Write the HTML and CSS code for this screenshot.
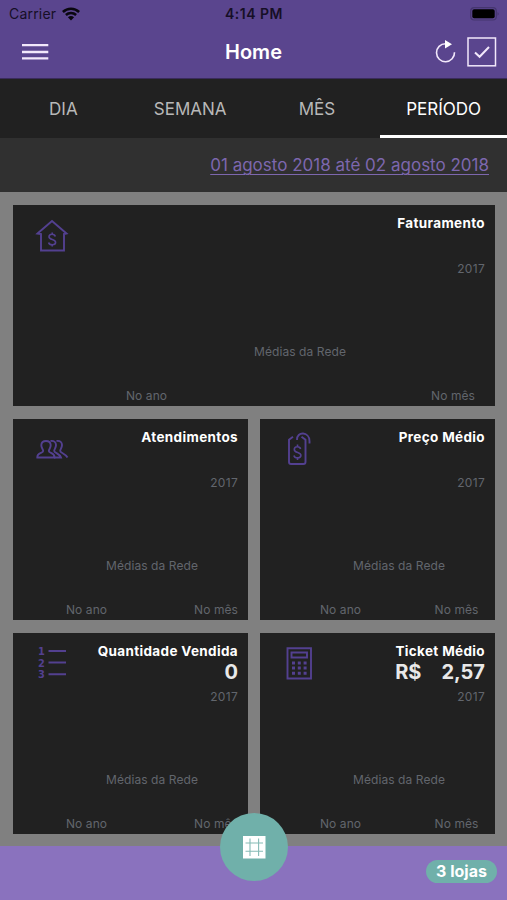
FILE: index.html
```html
<!DOCTYPE html>
<html lang="pt-BR">
<head>
<meta charset="utf-8">
<title>Home</title>
<link rel="stylesheet" href="styles.css">
</head>
<body>
<div class="app">
  <header class="header">
    <div class="status">
      <div class="carrier"><span>Carrier</span>
        <svg width="18" height="14" viewBox="0 0 18 14" fill="none" stroke="#09070f" stroke-width="2.500"><path d="M.9 5C5.400.6 12.600.6 17.100 5M3.900 8C6.800 5.200 11.200 5.200 14.100 8"/><path d="M5.900 10.200Q9 7.600 12.100 10.200L9 13.400z" fill="#09070f" stroke="none"/></svg>
      </div>
      <div class="clock">4:14 PM</div>
      <svg class="battery" width="30" height="14" viewBox="0 0 30 14"><rect x=".7" y=".7" width="25.600" height="12.300" rx="3.500" fill="none" stroke="#45366f" stroke-width="1.200"/><rect x="2.300" y="2.300" width="22.400" height="9" rx="1.800" fill="#000"/><path d="M27.600 5q2 1.900 0 3.800z" fill="#403268"/></svg>
    </div>
    <nav class="nav">
      <svg class="menu" width="27" height="18" viewBox="0 0 27 18" stroke="#f2e8fb" stroke-width="2.300"><path d="M0 2.200H26.300M0 9H26.300M0 15.400H26.300"/></svg>
      <h1>Home</h1>
      <div class="actions">
        <svg width="22" height="24" viewBox="0 0 22 24" fill="none" stroke="#f2e8fb" stroke-width="1.600"><path d="M10.500 3.700A9 9 0 1 0 19.500 12.300"/><path d="M10 0L17 4.200L10 8.400z" fill="#fff" stroke="none"/></svg>
        <svg width="30" height="30" viewBox="0 0 30 30" fill="none" stroke="#f2e8fb" stroke-width="1.500"><rect x="1" y="1" width="27.500" height="27.800"/><path d="M8 15.500L12.600 19.800L22 10" stroke-width="2"/></svg>
      </div>
    </nav>
  </header>
  <div class="tabs"><div>DIA</div><div>SEMANA</div><div>MÊS</div><div class="active">PERÍODO</div></div>
  <div class="period"><span>01 agosto 2018 até 02 agosto 2018</span></div>
  <main class="cards">
    <section class="card wide">
      <div class="head">
        <svg class="icon" width="34" height="36" viewBox="0 0 34 36"><path d="M2.500 16.500L17 4L31.500 16.500L29 17V33.500H6V17z"/><g class="dollar"><path d="M20.300 19.500C19.500 16.500 14 16.500 14 19.800C14 23.400 20.600 21.800 20.600 25.300C20.600 28.600 14.400 28.600 13.600 25.500M17.200 15.500V18M17.200 27V29.500"/></g></svg>
        <div class="figures"><h2>Faturamento</h2><div class="value"></div><div class="year">2017</div></div>
      </div>
      <p class="average">Médias da Rede</p>
      <div class="foot"><span>No ano</span><span>No mês</span></div>
    </section>
    <section class="card left">
      <div class="head">
        <svg class="icon" width="34" height="36" viewBox="0 0 34 36"><path d="M2.300 26.500C2 21.500 8 22.500 8.200 20C8.300 18.500 6.100 17 6.300 14C6.500 11 8 10 11 10S15.500 11 15.700 14C15.900 17 13.700 18.500 13.800 20C14 22.500 19.800 21.500 19.500 26.500z"/><path d="M15.500 10C19.500 9.500 21 11.500 21 14C21 17 19 18.500 19.200 20C19.400 22 24.500 22.500 26 26.500H19M21.500 10C25.500 9.500 27 11.500 27 14C27 17 25 18.500 25.200 20C25.400 22 30.500 22.500 32.500 26.500"/></svg>
        <div class="figures"><h2>Atendimentos</h2><div class="value"></div><div class="year">2017</div></div>
      </div>
      <p class="average">Médias da Rede</p>
      <div class="foot"><span>No ano</span><span>No mês</span></div>
    </section>
    <section class="card right">
      <div class="head">
        <svg class="icon" width="34" height="36" viewBox="0 0 34 36"><path d="M9 5.800L5 8.700V31Q5 33 7 33H19.500Q21.500 33 21.500 31V8.700L17.500 5.800M13 9C12.500 0 25.500 .500 25.500 10V12.500"/><g class="dollar" transform="translate(-3.700 -1)"><path d="M20.300 19C19.500 16 14 16 14 19.500C14 23.400 20.600 21.800 20.600 25.300C20.600 28.800 14.400 28.800 13.600 25.500M17.200 14.500V17.500M17.200 27V30"/></g></svg>
        <div class="figures"><h2>Preço Médio</h2><div class="value"></div><div class="year">2017</div></div>
      </div>
      <p class="average">Médias da Rede</p>
      <div class="foot"><span>No ano</span><span>No mês</span></div>
    </section>
    <section class="card left">
      <div class="head">
        <svg class="icon" width="34" height="38" viewBox="0 0 34 38"><g class="digits"><text x="3" y="9.800">1</text><text x="3" y="21.500">2</text><text x="3" y="33.200">3</text></g><path d="M13.500 6H31M13.500 17.500H31M13.500 29.200H31"/></svg>
        <div class="figures"><h2>Quantidade Vendida</h2><div class="value">0</div><div class="year">2017</div></div>
      </div>
      <p class="average">Médias da Rede</p>
      <div class="foot"><span>No ano</span><span>No mês</span></div>
    </section>
    <section class="card right">
      <div class="head">
        <svg class="icon" width="34" height="36" viewBox="0 0 34 36"><path d="M3.500 3.200H27V33.500H3.500zM7.500 7.500H23V12.500H7.500z"/><path class="keys" d="M8 18h3M13.800 18h3M19.600 18h3M8 23h3M13.800 23h3M19.600 23h3M8 28.200h3M13.800 28.200h3M19.600 28.200h3"/></svg>
        <div class="figures"><h2>Ticket Médio</h2><div class="value"><span class="currency">R$</span>2,57</div><div class="year">2017</div></div>
      </div>
      <p class="average">Médias da Rede</p>
      <div class="foot"><span>No ano</span><span>No mês</span></div>
    </section>
  </main>
  <footer class="bottom">
    <div class="fab"><svg width="24" height="24" viewBox="0 0 24 24"><path d="M1 1H23.500V23.500H1z" fill="#fff"/><path d="M8 3.500V21M16.600 3.500V21M3.500 8H21M3.500 16.300H21" stroke="#86bbb6" stroke-width="1.100"/></svg></div>
    <span class="badge">3 lojas</span>
  </footer>
</div>
</body>
</html>
```
FILE: styles.css
```css
* { box-sizing: border-box; }
body { margin: 0; font-family: Inter, Roboto, sans-serif; background: #808080; }
h1, h2, p { margin: 0; }
svg { display: block; flex: none; }
.app { width: 507px; height: 900px; display: flex; flex-direction: column; overflow: hidden; }
.header { height: 79px; flex: none; background: #5a458e; border-bottom: 1px solid #3a2b5b; }
.status { height: 26px; padding: 0 7px 0 9px; display: grid; grid-template-columns: 1fr auto 1fr; align-items: center; color: #160f26; font-size: 14px; line-height: 27px; }
.carrier { display: flex; align-items: center; gap: 6px; letter-spacing: .2px; }
.clock { font-weight: 600; letter-spacing: .5px; margin-right: 1px; }
.battery { justify-self: end; }
.nav { height: 51px; padding: 0 10px 0 22px; display: grid; grid-template-columns: 1fr auto 1fr; align-items: center; color: #fff; }
.nav h1 { font-size: 20px; font-weight: 600; line-height: 50px; margin-right: 12px; }
.actions { display: flex; justify-content: flex-end; align-items: center; gap: 10px; }
.tabs { height: 59px; flex: none; background: #212121; display: grid; grid-template-columns: repeat(4, 1fr); text-align: center; color: #b8b8b8; font-size: 17px; line-height: 60px; }
.active { color: #fff; border-bottom: 3px solid #fff; height: 59px; }
.period { height: 54px; flex: none; background: #303030; text-align: right; padding-right: 18px; color: #7d67ae; font-size: 17px; line-height: 54px; text-decoration: underline; text-underline-offset: 3px; text-decoration-thickness: 1px; }
.cards { height: 654px; flex: none; background: #808080; padding: 13px 12.500px 12px 13px; display: grid; grid-template-columns: 1fr 1fr; grid-template-rows: repeat(3, 201.300px); gap: 12.500px; }
.card { background: #212121; padding: 9px 9.500px 0 0; min-width: 0; }
.wide { grid-column: 1 / 3; }
.head { height: 68px; display: flex; justify-content: space-between; }
.icon { margin: 3px 0 0 22px; fill: none; stroke: #534090; stroke-width: 1.900; }
.right .icon { margin-left: 24px; }
.dollar { stroke-width: 1.600; }
.digits { font: 700 9.800px "DejaVu Sans", sans-serif; fill: #534090; stroke: none; }
.keys { stroke-width: 3; }
.figures { flex: 1; text-align: right; white-space: nowrap; }
.figures h2 { color: #fff; font-size: 13.500px; font-weight: 700; line-height: 18px; letter-spacing: .35px; }
.value { height: 24px; color: #e8e8e8; font-size: 20px; font-weight: 700; line-height: 24px; }
.currency { margin-right: 20px; }
.year, .average, .foot { color: #62666d; font-size: 12px; letter-spacing: .08px; }
.year { line-height: 26.500px; letter-spacing: .3px; }
.average { margin-top: 61px; padding-left: 93px; line-height: 18.500px; }
.wide .average { padding-left: 241px; }
.foot { margin-top: 25.500px; padding-left: 53px; line-height: 18.500px; display: flex; justify-content: space-between; }
.wide .foot { padding-left: 113px; padding-right: 10px; }
.right .foot { padding-left: 60px; padding-right: 6.500px; }
.bottom { height: 54px; flex: none; position: relative; background: #8a72be; display: flex; align-items: center; justify-content: flex-end; padding-right: 10px; }
.fab { position: absolute; left: 220px; top: -33px; width: 68px; height: 68px; border-radius: 50%; background: #70b0aa; display: flex; align-items: center; justify-content: center; }
.badge { width: 71px; height: 23px; margin-top: -4px; border-radius: 12px; background: #70b0aa; color: #fff; text-align: center; font-size: 16px; font-weight: 700; line-height: 23px; }
```
